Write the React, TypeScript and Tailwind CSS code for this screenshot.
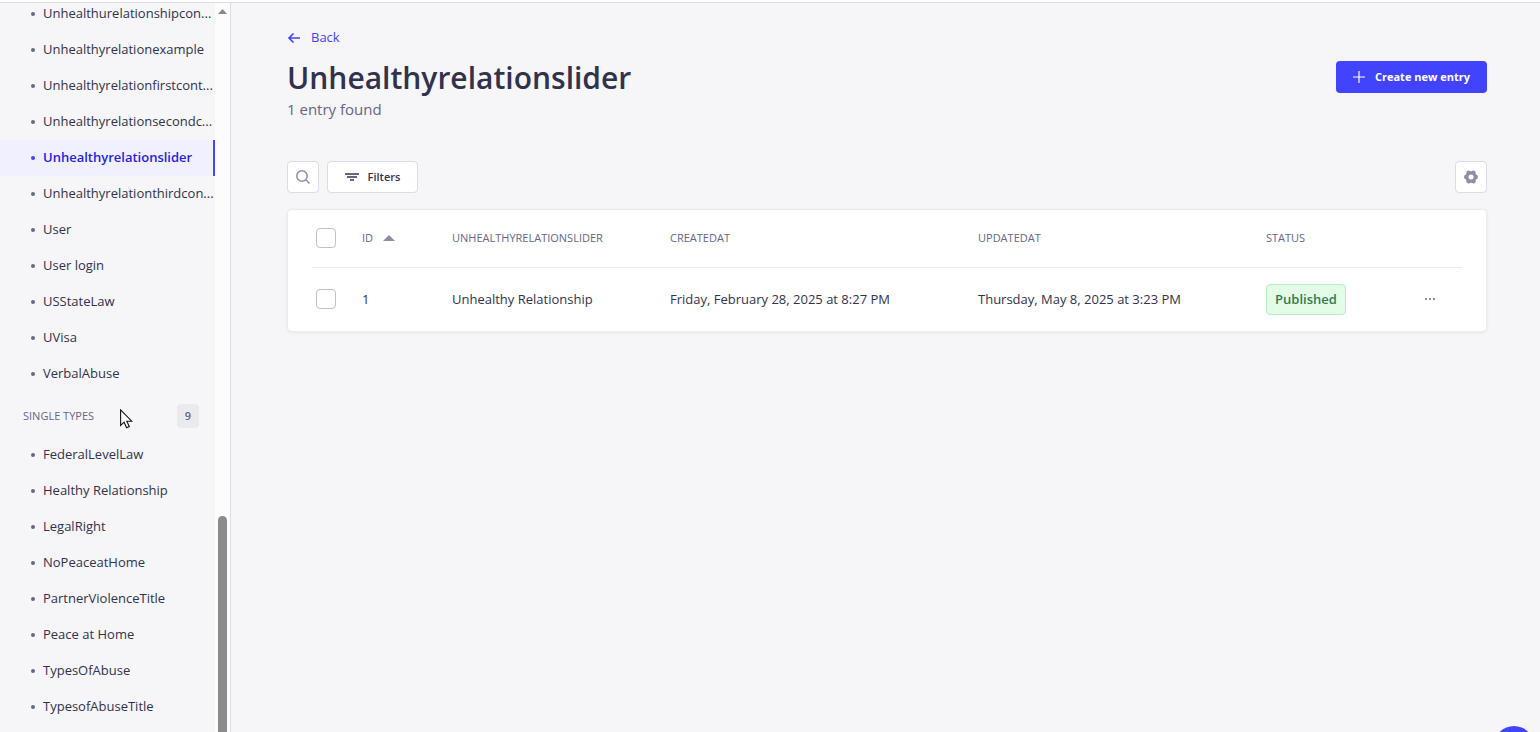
import React from "react";

const collectionTypes = [
  "Unhealthurelationshipcon...",
  "Unhealthyrelationexample",
  "Unhealthyrelationfirstcont...",
  "Unhealthyrelationsecondc...",
  "Unhealthyrelationslider",
  "Unhealthyrelationthirdcon...",
  "User",
  "User login",
  "USStateLaw",
  "UVisa",
  "VerbalAbuse",
];

const singleTypes = [
  "FederalLevelLaw",
  "Healthy Relationship",
  "LegalRight",
  "NoPeaceatHome",
  "PartnerViolenceTitle",
  "Peace at Home",
  "TypesOfAbuse",
  "TypesofAbuseTitle",
];

function NavItem({ label, active = false }: { label: string; active?: boolean }) {
  return (
    <li>
      <a
        href="#"
        aria-current={active ? "page" : undefined}
        className={
          active
            ? "flex h-9 items-center gap-2 border-r-2 border-[#4143ff] bg-[#f0f0ff] pl-[31px] font-semibold whitespace-nowrap text-[#271fe0]"
            : "flex h-9 items-center gap-2 pl-[31px] whitespace-nowrap text-[#32324d]"
        }
      >
        <span className={active ? "size-1 shrink-0 rounded-full bg-[#4143ff]" : "size-1 shrink-0 rounded-full bg-[#666687]"} />
        {label}
      </a>
    </li>
  );
}

function Sidebar() {
  return (
    <aside className="relative flex w-[231px] shrink-0 overflow-hidden border-r border-[#dcdce4]">
      <nav className="-mt-[7px] min-w-0 flex-1 text-[13px]">
        <ul>
          {collectionTypes.map((t) => (
            <NavItem key={t} label={t} active={t === "Unhealthyrelationslider"} />
          ))}
        </ul>
        <div className="flex items-center justify-between pt-3 pr-4 pb-[9px] pl-[23px] text-[#666687]">
          <h2 className="text-[11px] font-medium">SINGLE TYPES</h2>
          <span className="flex h-6 w-[22px] items-center justify-center rounded bg-[#eaeaef] text-[11px] font-semibold">9</span>
        </div>
        <ul>
          {singleTypes.map((t) => (
            <NavItem key={t} label={t} />
          ))}
        </ul>
      </nav>
      <div className="flex w-[15px] shrink-0 flex-col items-center bg-[#fcfcfc] pt-[6px]">
        <svg width="9" height="5" viewBox="0 0 9 5" fill="#8b8b8b" aria-hidden="true">
          <path d="M4.5 0 9 5H0z" />
        </svg>
        <div className="mt-[502px] w-[9px] flex-1 rounded-t-full bg-[#8b8b8b]" />
      </div>
      <svg className="absolute top-[406px] left-[120px]" width="13" height="20" viewBox="0 0 13 20" aria-hidden="true">
        <path d="M.6 .9v15.6l3.5-3.3 2.5 5.5 2.7-1.2-2.500-5.300h4.900z" fill="#fff" stroke="#11111c" strokeWidth="1.1" />
      </svg>
    </aside>
  );
}

function Checkbox({ label }: { label: string }) {
  return (
    <input
      type="checkbox"
      aria-label={label}
      className="block size-5 appearance-none rounded border border-[#c0c0cf] bg-white checked:bg-[#4143ff]"
    />
  );
}

function EntriesTable() {
  return (
    <div className="mx-px mt-[17px] rounded bg-white px-6 shadow-[0_1px_4px_rgba(33,33,52,0.1)] ring-1 ring-[#eaeaef]">
      <table className="w-full table-fixed border-collapse text-left text-[13px] text-[#32324d]">
        <colgroup>
          <col className="w-[50px]" />
          <col className="w-[90px]" />
          <col className="w-[218px]" />
          <col className="w-[308px]" />
          <col className="w-[288px]" />
          <col className="w-[130px]" />
          <col className="w-[66px]" />
        </colgroup>
        <thead>
          <tr className="h-[57px] border-b border-[#eaeaef] text-[11px] text-[#666687]">
            <th className="pl-1"><Checkbox label="Select all entries" /></th>
            <th className="font-medium">
              <button type="button" className="flex items-center gap-[10px]">
                ID
                <svg width="12" height="6" viewBox="0 0 12 6" fill="#8e8ea9" aria-hidden="true">
                  <path d="M6 0l6 6H0z" />
                </svg>
              </button>
            </th>
            <th className="font-medium">UNHEALTHYRELATIONSLIDER</th>
            <th className="font-medium">CREATEDAT</th>
            <th className="font-medium">UPDATEDAT</th>
            <th className="font-medium">STATUS</th>
            <th />
          </tr>
        </thead>
        <tbody>
          <tr className="h-16">
            <td className="pl-1"><Checkbox label="Select entry 1" /></td>
            <td>1</td>
            <td>Unhealthy Relationship</td>
            <td>Friday, February 28, 2025 at 8:27 PM</td>
            <td>Thursday, May 8, 2025 at 3:23 PM</td>
            <td>
              <span className="inline-flex h-[31px] w-20 items-center justify-center rounded border border-[#b7efc2] bg-[#e3fce8] font-semibold text-[#2f7d50]">
                Published
              </span>
            </td>
            <td>
              <button type="button" aria-label="Row actions" className="ml-[26px] flex size-4 items-center justify-center">
                <svg width="12" height="2" viewBox="0 0 12 2" fill="#8e8ea9" aria-hidden="true">
                  <path d="M1 0h2v2H1zM5 0h2v2H5zM9 0h2v2H9z" />
                </svg>
              </button>
            </td>
          </tr>
        </tbody>
      </table>
    </div>
  );
}

export default function App() {
  return (
    <div className="relative flex h-screen flex-col overflow-hidden bg-[#f6f6f9] pt-[2px] font-['Open_Sans','Noto_Sans',sans-serif] text-[#32324d]">
      <div className="absolute inset-x-0 top-0 h-[2px] bg-white" />
      <div className="flex min-h-0 flex-1 border-t border-[#dcdce4]">
        <Sidebar />
        <main className="min-w-0 flex-1 pt-[23px] pr-[53px] pl-14">
          <a href="#" className="inline-flex h-5 items-center gap-[10px] text-[13px] text-[#4143ff]">
            <svg width="14" height="12" viewBox="0 0 14 12" fill="none" stroke="#4143ff" strokeWidth="1.6" aria-hidden="true">
              <path d="M13 6H2.500M6.500 1.500 2 6l4.500 4.500" />
            </svg>
            Back
          </a>
          <header className="flex items-start justify-between pt-[7px]">
            <div>
              <h1 className="pt-[2px] text-[30px] leading-[38px] font-semibold">Unhealthyrelationslider</h1>
              <p className="text-[15px] leading-6 text-[#666687]">1 entry found</p>
            </div>
            <button type="button" className="mt-1 flex h-8 w-[151px] items-center justify-center gap-[10px] rounded bg-[#4143ff] text-[11px] font-bold text-white">
              <svg width="12" height="12" viewBox="0 0 12 12" fill="none" stroke="#fff" strokeWidth="1.2" aria-hidden="true">
                <path d="M6 0v12M0 6h12" />
              </svg>
              Create new entry
            </button>
          </header>
          <div className="flex gap-2 pt-10">
            <button type="button" aria-label="Search" className="flex size-8 items-center justify-center rounded border border-[#dcdce4] bg-white">
              <svg width="14" height="14" viewBox="0 0 14 14" fill="none" stroke="#8e8ea9" strokeWidth="1.5" aria-hidden="true">
                <circle cx="6" cy="6" r="5.200" />
                <path d="M9.800 9.800 13.500 13.500" />
              </svg>
            </button>
            <button type="button" className="flex h-8 w-[91px] items-center justify-center gap-[9px] rounded border border-[#dcdce4] bg-white text-[11px] font-semibold">
              <svg width="14" height="8" viewBox="0 0 14 8" fill="#666687" aria-hidden="true">
                <path d="M0 0h14v2H0zM2 3h10v2H2zM5 6h4v2H5z" />
              </svg>
              Filters
            </button>
            <button type="button" aria-label="View settings" className="ml-auto flex size-8 items-center justify-center rounded border border-[#dcdce4] bg-white">
              <svg width="14" height="14" viewBox="0 0 14 14" aria-hidden="true">
                <g fill="#8e8ea9">
                  <circle cx="7" cy="7" r="5.800" />
                  <circle cx="2.200" cy="7" r="2.200" />
                  <circle cx="11.800" cy="7" r="2.200" />
                  <circle cx="4.600" cy="2.700" r="2.200" />
                  <circle cx="9.400" cy="2.700" r="2.200" />
                  <circle cx="4.600" cy="11.300" r="2.200" />
                  <circle cx="9.400" cy="11.300" r="2.200" />
                </g>
                <circle cx="7" cy="7" r="2.500" fill="#fff" />
              </svg>
            </button>
          </div>
          <EntriesTable />
        </main>
      </div>
      <button type="button" aria-label="Help" className="absolute right-[6px] -bottom-[34px] size-10 rounded-full bg-[#4143ff]" />
    </div>
  );
}
